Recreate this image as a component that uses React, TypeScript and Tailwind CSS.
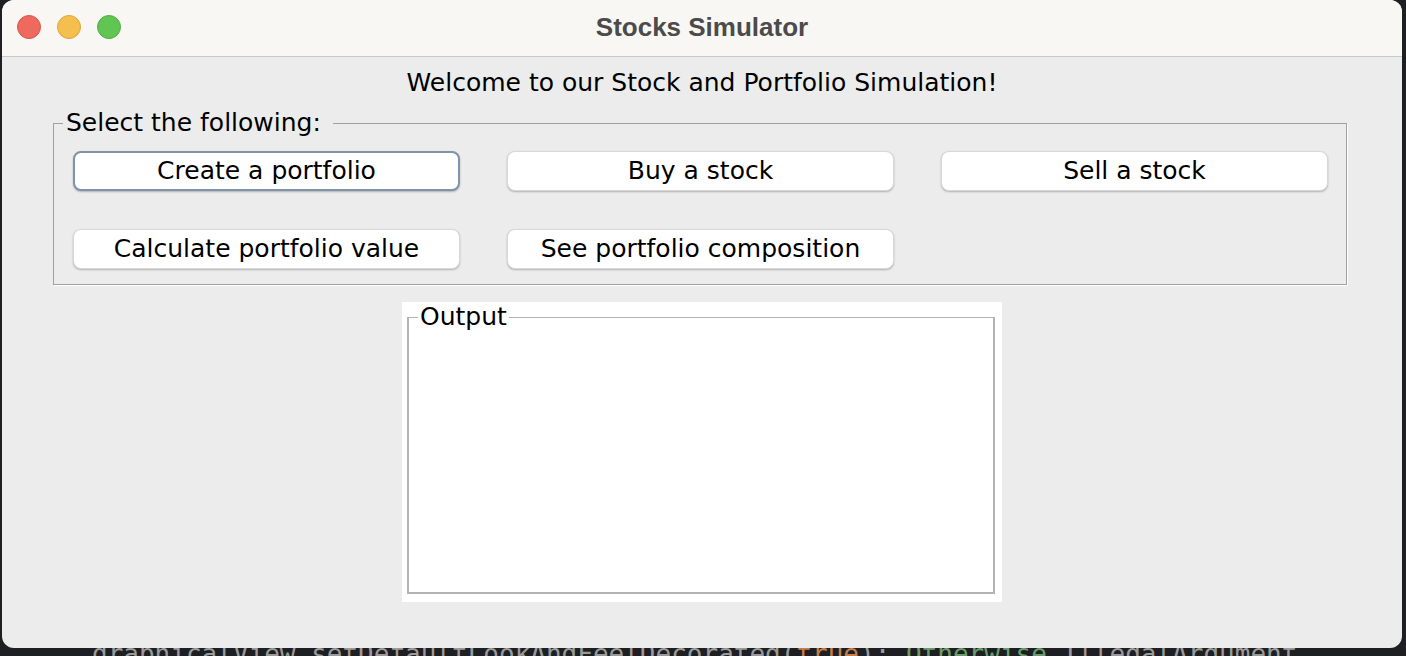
import React from 'react';

const uiFont = { fontFamily: '"DejaVu Sans", "Noto Sans", sans-serif' };

function ActionButton({ label, focused }: { label: string; focused?: boolean }) {
  return (
    <button
      className={
        'h-[40px] w-full rounded-[8px] bg-white text-[25px] leading-[28px] text-black shadow-[0_1px_2px_rgba(0,0,0,0.25)] ' +
        (focused ? 'border-2 border-[#8093ad]' : 'border border-[#d8d8d8]')
      }
      style={uiFont}
    >
      {label}
    </button>
  );
}

export default function App() {
  return (
    <div className="w-[1406px] h-[656px] bg-[#1e1f22] overflow-hidden">
      <div className="ml-[2px] w-[1400px] h-[648px] rounded-[12px] bg-[#ececec] overflow-hidden flex flex-col">
        {/* title bar */}
        <div className="relative h-[57px] shrink-0 bg-[#f9f7f4] border-b border-[#c8c8c8] flex items-center justify-center">
          <div className="absolute left-[15px] top-[15px] flex gap-[16px]">
            <span className="w-[24px] h-[24px] rounded-full bg-[#ee6a5e] border border-[#d9574c]" />
            <span className="w-[24px] h-[24px] rounded-full bg-[#f5bf4f] border border-[#dca63c]" />
            <span className="w-[24px] h-[24px] rounded-full bg-[#61c554] border border-[#52ad45]" />
          </div>
          <span
            className="text-[26px] font-bold text-[#4b4b4b] -mt-[2px]"
            style={{ fontFamily: '"Liberation Sans", Arial, sans-serif' }}
          >
            Stocks Simulator
          </span>
        </div>

        {/* content */}
        <div className="flex flex-col items-center pt-[11px]" style={uiFont}>
          <div className="text-[25px] leading-[30px] text-black">
            Welcome to our Stock and Portfolio Simulation!
          </div>

          <fieldset className="mt-[11px] w-[1294px] ml-[-4px] border border-[#a0a0a0] shadow-[1px_1px_0_#ffffff] pl-[19px] pr-[18px] pt-[14px] pb-[15px]">
            <legend className="ml-[-10px] pl-[3px] pr-[12px] text-[25px] leading-[28px] text-black">
              Select the following:
            </legend>
            <div className="grid grid-cols-3 gap-x-[47px] gap-y-[38px]">
              <ActionButton label="Create a portfolio" focused />
              <ActionButton label="Buy a stock" />
              <ActionButton label="Sell a stock" />
              <ActionButton label="Calculate portfolio value" />
              <ActionButton label="See portfolio composition" />
            </div>
          </fieldset>

          <div className="mt-[17px] w-[600px] h-[300px] bg-white pl-[5px] pr-[7px] pb-[8px] pt-[1px] flex">
            <fieldset className="flex-1 border-2 border-[#b3b3b3] border-t-[1px] border-l-[2px]">
              <legend className="ml-[9px] px-[2px] text-[25px] leading-[28px] text-black">Output</legend>
            </fieldset>
          </div>
        </div>
      </div>
      <div
        className="h-[8px] overflow-hidden pl-[92px] text-[26px] leading-[12px] text-[#9a9a9a] whitespace-nowrap"
        style={{ fontFamily: '"DejaVu Sans Mono", monospace' }}
      >
        graphicalView.setDefaultLookAndFeelDecorated(<span className="text-[#c77d4a]">true</span>);{'       '}
        <span className="text-[#6a9c6a]">Otherwise</span> IllegalArgument
      </div>
    </div>
  );
}
